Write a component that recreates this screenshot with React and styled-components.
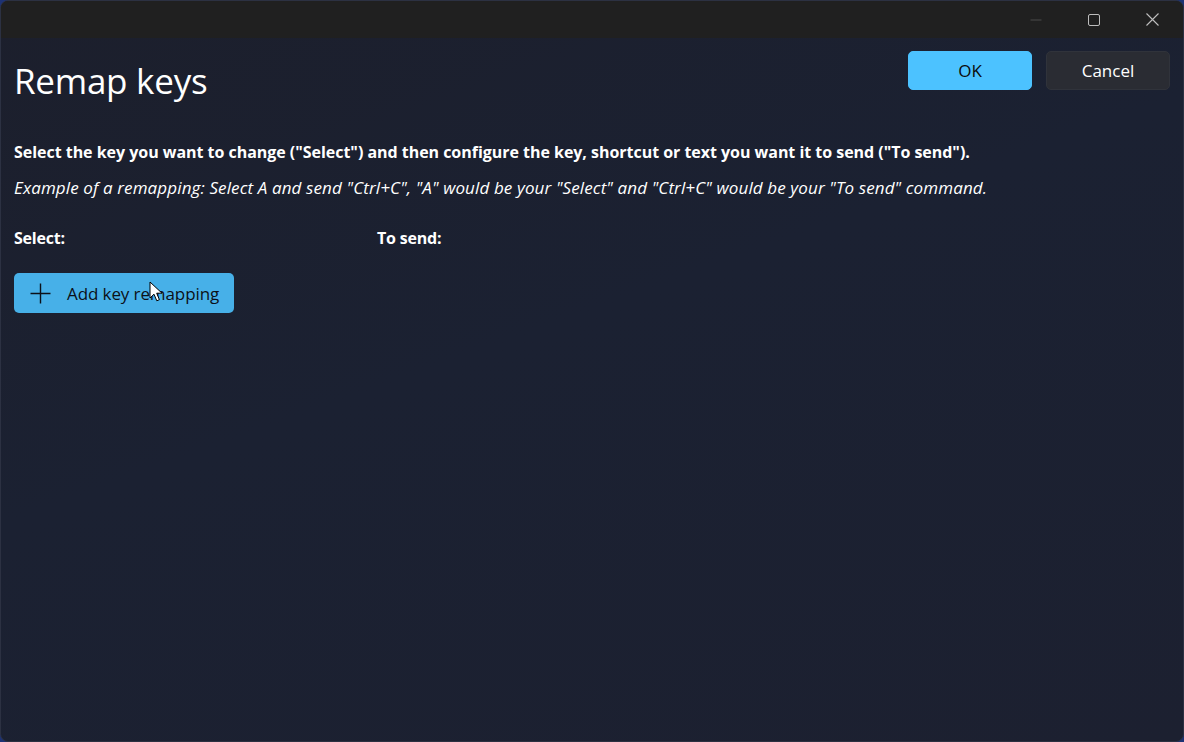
import React from "react";
import styled, { createGlobalStyle } from "styled-components";

const Global = createGlobalStyle`
  html, body { margin: 0; padding: 0; height: 100%; }
  body {
    background: #1d3274;
    font-family: "Open Sans", "Noto Sans", sans-serif;
    overflow: hidden;
  }
  #root { height: 100%; }
`;

const Window = styled.div`
  box-sizing: border-box;
  width: 1184px;
  height: 742px;
  border-radius: 8px;
  border: 1px solid #2c3142;
  overflow: hidden;
  display: flex;
  flex-direction: column;
  background: linear-gradient(160deg, #1c1f2c 0%, #1b2132 45%, #1c2030 100%);
  position: relative;
`;

const TitleBar = styled.div`
  height: 37px;
  flex: none;
  background: #202020;
  display: flex;
  justify-content: flex-end;
  align-items: stretch;
  padding-right: 2px;
`;

const CaptionButton = styled.div`
  width: 58px;
  display: flex;
  align-items: center;
  justify-content: center;
  color: ${(p) => (p.$dim ? "#4a4a4a" : "#bdbdbd")};
`;

const Content = styled.div`
  flex: 1;
  padding: 13px 13px 0 13px;
  display: flex;
  flex-direction: column;
`;

const Header = styled.div`
  display: flex;
  justify-content: space-between;
  align-items: flex-start;
`;

const Title = styled.h1`
  margin: 4px 0 0 0;
  font-weight: 400;
  font-size: 35px;
  line-height: 52px;
  color: #ffffff;
  letter-spacing: -0.25px;
`;

const Actions = styled.div`
  display: flex;
  gap: 14px;
`;

const DialogButton = styled.button`
  width: 124px;
  height: 39px;
  border-radius: 5px;
  font-family: inherit;
  font-size: 17px;
  cursor: default;
  background: ${(p) => (p.$primary ? "#4cc2ff" : "#2a2c33")};
  color: ${(p) => (p.$primary ? "#0b0b0b" : "#ffffff")};
  border: 1px solid ${(p) => (p.$primary ? "#4cc2ff" : "#30333b")};
`;

const Instruction = styled.p`
  margin: 34px 0 0 0;
  font-size: 16px;
  font-weight: 700;
  line-height: 22px;
  color: #ffffff;
  letter-spacing: -0.03px;
`;

const Example = styled.p`
  margin: 14px 0 0 0;
  font-size: 17px;
  font-style: italic;
  line-height: 22px;
  color: #ffffff;
  letter-spacing: 0.12px;
`;

const Columns = styled.div`
  display: grid;
  grid-template-columns: 363px 1fr;
  margin-top: 28px;
`;

const ColumnLabel = styled.div`
  font-size: 16px;
  font-weight: 700;
  line-height: 22px;
  color: #ffffff;
  letter-spacing: -0.2px;
`;

const AddWrap = styled.div`
  position: relative;
  margin-top: 24px;
  align-self: flex-start;
`;

const AddButton = styled.button`
  width: 220px;
  height: 40px;
  border-radius: 5px;
  border: none;
  background: #47b0e8;
  color: #0c1018;
  display: flex;
  align-items: center;
  gap: 16px;
  padding: 0 0 0 16px;
  font-family: inherit;
  font-size: 17px;
  letter-spacing: -0.1px;
  cursor: default;
`;

const Cursor = styled.svg`
  position: absolute;
  left: 135px;
  top: 8px;
  pointer-events: none;
`;

export default function App() {
  return (
    <>
      <Global />
      <Window>
        <TitleBar>
          <CaptionButton $dim>
            <svg width="12" height="12" viewBox="0 0 12 12">
              <line x1="0.5" y1="6" x2="11.5" y2="6" stroke="currentColor" strokeWidth="1" />
            </svg>
          </CaptionButton>
          <CaptionButton>
            <svg width="12" height="12" viewBox="0 0 12 12">
              <rect x="0.5" y="0.5" width="11" height="11" rx="1.5" fill="none" stroke="currentColor" strokeWidth="1" />
            </svg>
          </CaptionButton>
          <CaptionButton>
            <svg width="13" height="13" viewBox="0 0 13 13">
              <path d="M0.5 0.5 L12.5 12.5 M12.5 0.5 L0.5 12.5" stroke="currentColor" strokeWidth="1.1" />
            </svg>
          </CaptionButton>
        </TitleBar>
        <Content>
          <Header>
            <Title>Remap keys</Title>
            <Actions>
              <DialogButton $primary>OK</DialogButton>
              <DialogButton>Cancel</DialogButton>
            </Actions>
          </Header>
          <Instruction>
            Select the key you want to change ("Select") and then configure the key, shortcut or text you want it to send ("To send").
          </Instruction>
          <Example>
            Example of a remapping: Select A and send "Ctrl+C", "A" would be your "Select" and "Ctrl+C" would be your "To send" command.
          </Example>
          <Columns>
            <ColumnLabel>Select:</ColumnLabel>
            <ColumnLabel>To send:</ColumnLabel>
          </Columns>
          <AddWrap>
            <AddButton>
              <svg width="21" height="21" viewBox="0 0 21 21">
                <path d="M10.5 0.5 V20.5 M0.5 10.5 H20.5" stroke="#0c1018" strokeWidth="1.4" />
              </svg>
              <span>Add key remapping</span>
            </AddButton>
            <Cursor width="14" height="22" viewBox="0 0 14 22">
              <path d="M1 1 L1 17 L5 13.2 L7.8 19.8 L10.4 18.7 L7.7 12.2 L13 12.2 Z" fill="#ffffff" stroke="#000000" strokeWidth="1" strokeLinejoin="round" />
            </Cursor>
          </AddWrap>
        </Content>
      </Window>
    </>
  );
}
